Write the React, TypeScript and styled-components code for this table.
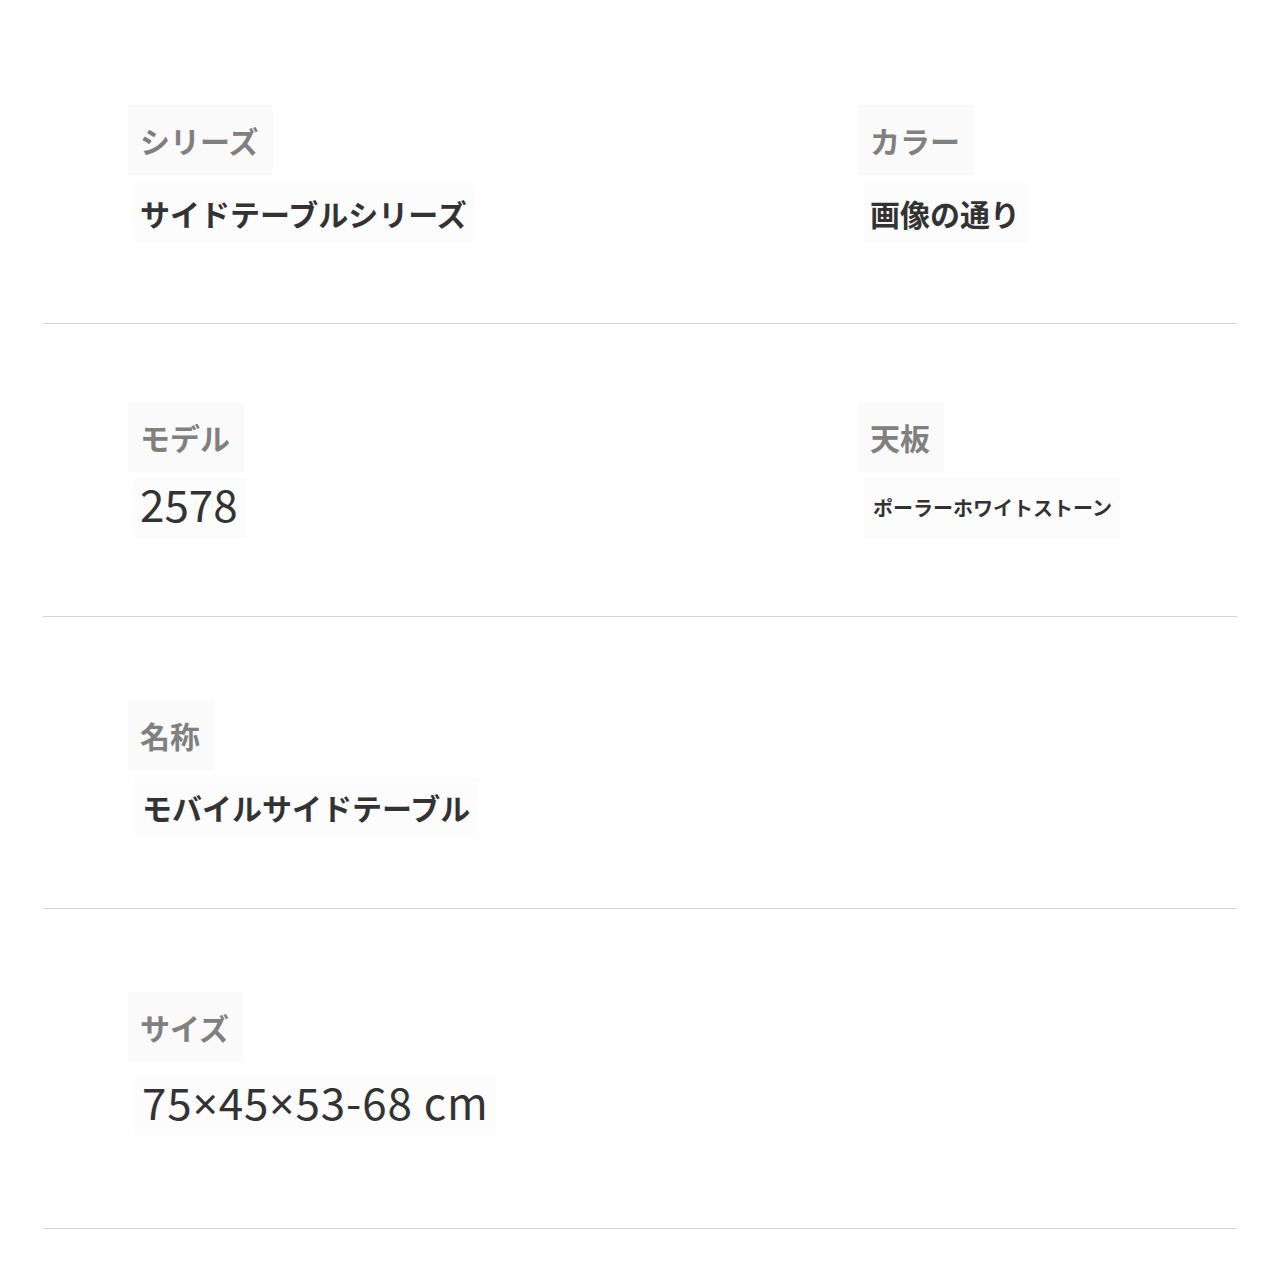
import React from "react";
import styled, { createGlobalStyle } from "styled-components";

const Global = createGlobalStyle`
  html, body { margin: 0; padding: 0; background: #ffffff; }
  body { font-family: "Noto Sans CJK JP", "Noto Sans", sans-serif; }
`;

const Page = styled.div`
  width: 1280px;
  padding: 0 43px;
  box-sizing: border-box;
`;

const Row = styled.section<{ $top: number; $bottom: number }>`
  display: grid;
  grid-template-columns: 730px 1fr;
  padding: ${(p) => p.$top}px 0 ${(p) => p.$bottom}px 97px;
  border-bottom: 1px solid #d6d6d6;
`;

const Cell = styled.div<{ $gap: number }>`
  display: flex;
  flex-direction: column;
  align-items: flex-start;
  gap: ${(p) => p.$gap}px;
`;

const Label = styled.div`
  height: 70px;
  line-height: 70px;
  padding: 0 14px 0 12px;
  margin-left: -12px;
  background: #fafafa;
  font-size: 30px;
  font-weight: 700;
  color: #808080;
  white-space: nowrap;
`;

const Value = styled.div<{
  $size: number;
  $weight: number;
  $lh: number;
  $inset: number;
  $spacing: number;
}>`
  height: 60px;
  line-height: ${(p) => p.$lh}px;
  padding: 0 8px 0 ${(p) => 6 + p.$inset}px;
  margin-left: -6px;
  background: #fcfcfc;
  font-size: ${(p) => p.$size}px;
  font-weight: ${(p) => p.$weight};
  letter-spacing: ${(p) => p.$spacing}px;
  color: #333333;
  white-space: nowrap;
`;

const Times = styled.span`
  font-family: "Noto Sans", sans-serif;
`;

type Item = {
  label: string;
  value: React.ReactNode;
  size?: number;
  weight?: number;
  lh?: number;
  inset?: number;
  spacing?: number;
};

const rows: { top: number; bottom: number; gap: number; items: Item[] }[] = [
  {
    top: 105,
    bottom: 80,
    gap: 8,
    items: [
      { label: "シリーズ", value: "サイドテーブルシリーズ" },
      { label: "カラー", value: "画像の通り" },
    ],
  },
  {
    top: 78,
    bottom: 78,
    gap: 6,
    items: [
      { label: "モデル", value: "2578", size: 44, weight: 400, lh: 51 },
      { label: "天板", value: "ポーラーホワイトストーン", size: 20, weight: 700, inset: 3 },
    ],
  },
  {
    top: 83,
    bottom: 71,
    gap: 7,
    items: [{ label: "名称", value: "モバイルサイドテーブル", inset: 2 }],
  },
  {
    top: 83,
    bottom: 93,
    gap: 13,
    items: [
      {
        label: "サイズ",
        value: (
          <>
            75<Times>×</Times>45<Times>×</Times>53-68 cm
          </>
        ),
        size: 44,
        weight: 400,
        lh: 52,
        inset: 2,
        spacing: 0.9,
      },
    ],
  },
];

export default function App() {
  return (
    <>
      <Global />
      <Page>
        {rows.map((r, i) => (
          <Row key={i} $top={r.top} $bottom={r.bottom}>
            {r.items.map((it) => (
              <Cell key={it.label} $gap={r.gap}>
                <Label>{it.label}</Label>
                <Value
                  $size={it.size ?? 30}
                  $weight={it.weight ?? 700}
                  $lh={it.lh ?? 60}
                  $inset={it.inset ?? 0}
                  $spacing={it.spacing ?? 0}
                >
                  {it.value}
                </Value>
              </Cell>
            ))}
          </Row>
        ))}
      </Page>
    </>
  );
}
